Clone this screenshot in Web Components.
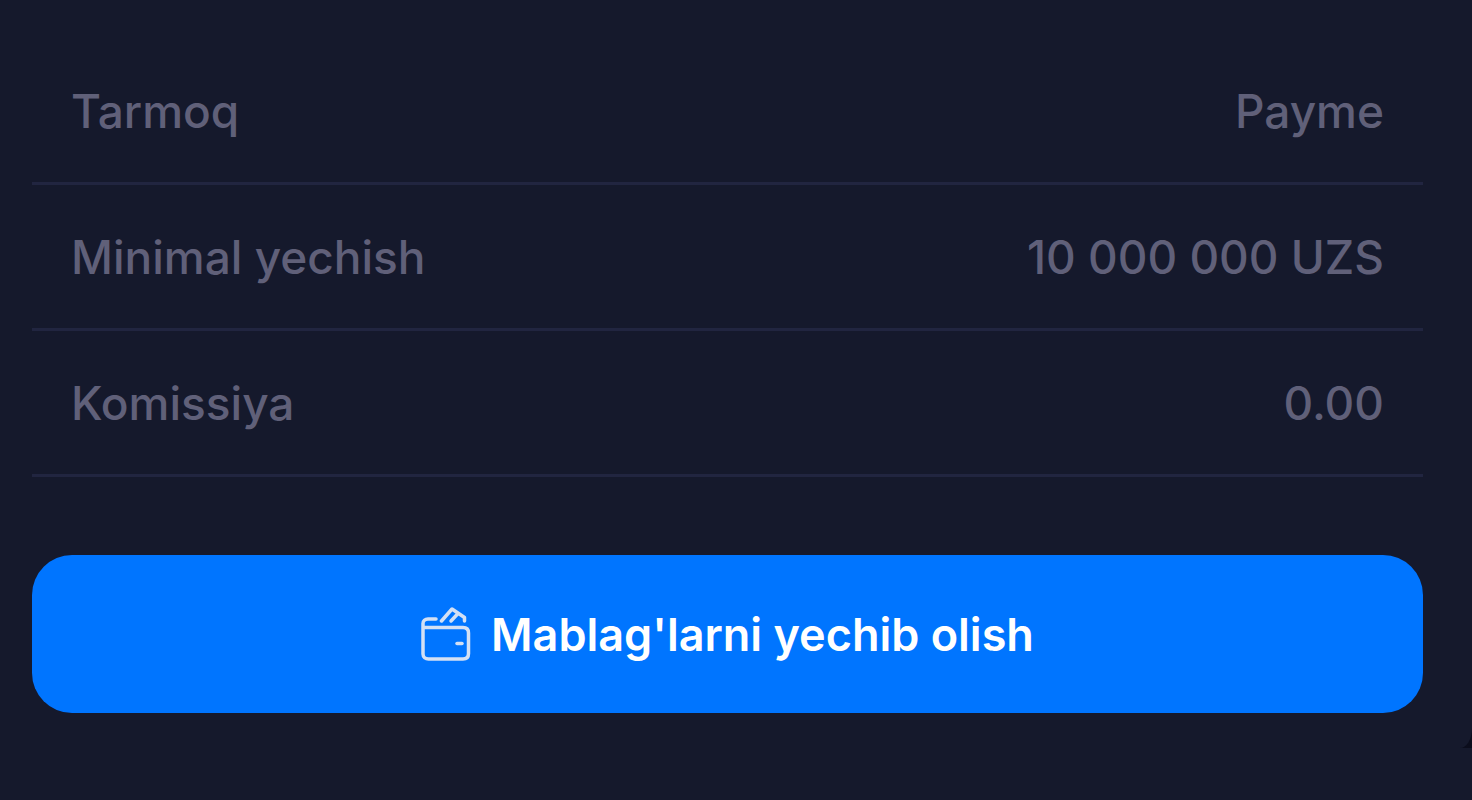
<!DOCTYPE html>
<html lang="uz">
<head>
  <meta charset="utf-8">
  <meta name="viewport" content="width=device-width, initial-scale=1">
  <title>Payme</title>
  <style>
    body {
      margin: 0;
      background-color: #15192c;
      color: #606079;
      font-family: Inter, "Noto Sans", sans-serif;
    }
  </style>
</head>
<body>
  <withdraw-card>
    <detail-row><span slot="label">Tarmoq</span>Payme</detail-row>
    <detail-row><span slot="label">Minimal yechish</span>10 000 000 UZS</detail-row>
    <detail-row><span slot="label">Komissiya</span>0.00</detail-row>
    <withdraw-button slot="action">Mablag'larni yechib olish</withdraw-button>
  </withdraw-card>

  <script>
    class WithdrawCard extends HTMLElement {
      constructor() {
        super();
        this.attachShadow({ mode: 'open' });
        this.shadowRoot.innerHTML = `
          <style>
            :host {
              display: block;
              background-color: #0b0d1c;
            }
            .card {
              background-color: #15192c;
              border-bottom-right-radius: 12px 20px;
              padding: 39px 49px 35px 32px;
            }
            .action {
              margin-top: 78px;
            }
          </style>
          <section class="card">
            <div class="rows"><slot></slot></div>
            <div class="action"><slot name="action"></slot></div>
          </section>
        `;
      }
    }

    class DetailRow extends HTMLElement {
      constructor() {
        super();
        this.attachShadow({ mode: 'open' });
        this.shadowRoot.innerHTML = `
          <style>
            :host {
              display: block;
              border-bottom: 3px solid #212540;
              font-size: 46px;
              font-weight: 500;
              line-height: 63px;
            }
            dl {
              display: flex;
              justify-content: space-between;
              gap: 20px;
              margin: 0;
              padding: 41px 39px 39px;
            }
            dd {
              margin: 0;
              text-align: right;
            }
          </style>
          <dl>
            <dt><slot name="label"></slot></dt>
            <dd><slot></slot></dd>
          </dl>
        `;
      }
    }

    class WalletIcon extends HTMLElement {
      constructor() {
        super();
        this.attachShadow({ mode: 'open' });
        this.shadowRoot.innerHTML = `
          <style>
            :host {
              display: block;
              width: 50px;
              height: 56px;
            }
            svg {
              display: block;
            }
          </style>
          <svg width="50" height="56" viewBox="0 0 50 56" fill="none" stroke="#d3e0f4" stroke-width="3.500" stroke-linecap="round" stroke-linejoin="round" aria-hidden="true">
            <path d="M15 12H7C4 12 2 14 2 16.500V47C2 50 4.500 52 7.500 52H42C45.500 52 47.500 50 47.500 46.500V26C47.500 22.500 45.500 20.500 42 20.500H3"/>
            <path d="M20.500 14L31 2L43.500 10.500V14"/>
            <path d="M30 14L37 6.500"/>
            <path d="M36 36.500H41"/>
          </svg>
        `;
      }
    }

    class WithdrawButton extends HTMLElement {
      constructor() {
        super();
        this.attachShadow({ mode: 'open' });
        this.shadowRoot.innerHTML = `
          <style>
            :host {
              display: block;
            }
            button {
              display: flex;
              align-items: center;
              justify-content: center;
              gap: 20px;
              width: 100%;
              padding: 48px 40px 46px;
              border: none;
              border-radius: 40px;
              background-color: #0075ff;
              color: #fff;
              font-family: inherit;
              font-size: 45px;
              font-weight: 600;
              line-height: 64px;
              cursor: pointer;
            }
            button:hover {
              background-color: #0a6ae0;
            }
          </style>
          <button type="button">
            <wallet-icon></wallet-icon>
            <span><slot></slot></span>
          </button>
        `;
      }
    }

    customElements.define('withdraw-card', WithdrawCard);
    customElements.define('detail-row', DetailRow);
    customElements.define('wallet-icon', WalletIcon);
    customElements.define('withdraw-button', WithdrawButton);
  </script>
</body>
</html>
